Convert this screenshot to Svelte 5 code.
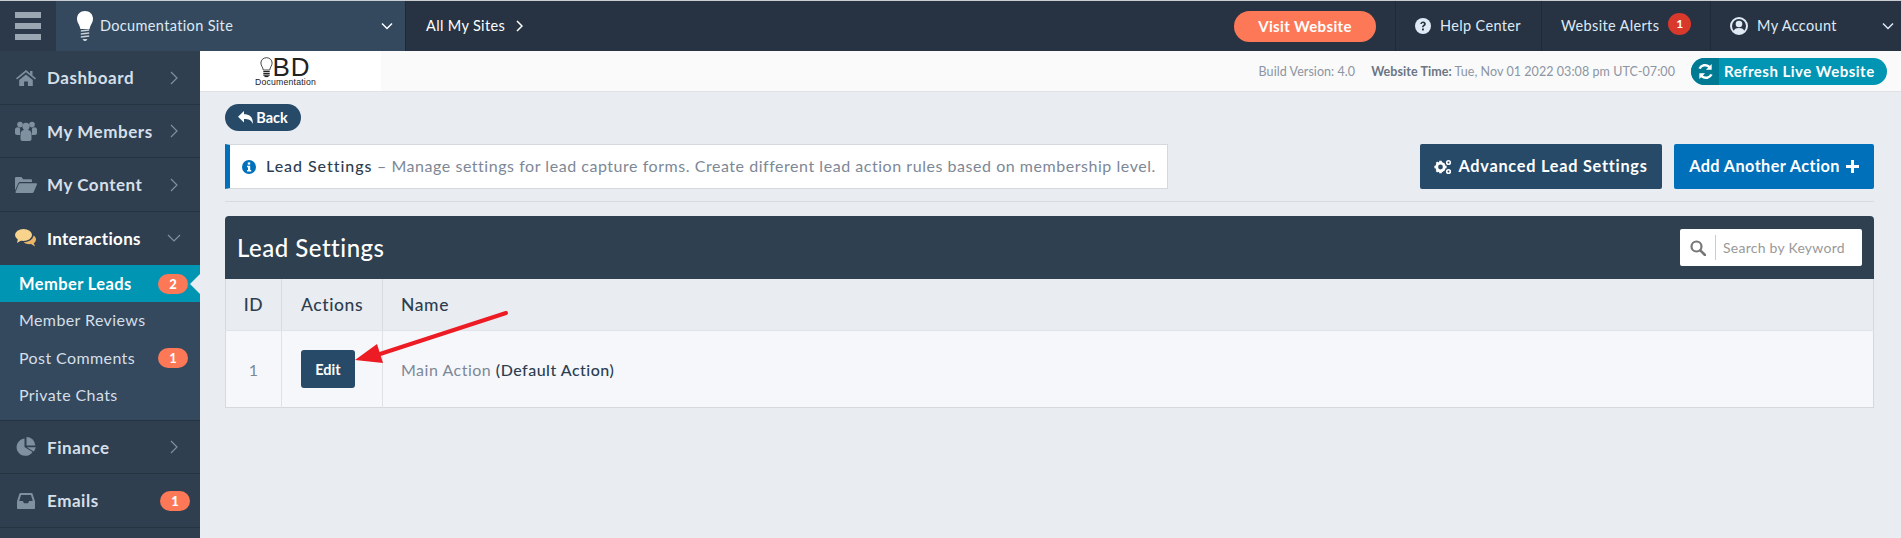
<script>
  const topItems = [
    { label: 'Dashboard', icon: 'home' },
    { label: 'My Members', icon: 'users' },
    { label: 'My Content', icon: 'folder' }
  ];
  const subItems = [
    { label: 'Member Leads', badge: '2', active: true },
    { label: 'Member Reviews' },
    { label: 'Post Comments', badge: '1' },
    { label: 'Private Chats' }
  ];
</script>

{#snippet chevronRight()}
  <svg class="chev" width="8" height="14" viewBox="0 0 8 14"><path d="M1 1l6 6-6 6" fill="none" stroke="currentColor" stroke-width="1.2"/></svg>
{/snippet}

{#snippet navIcon(name)}
  {#if name === 'home'}
    <svg class="ni" width="20" height="16" viewBox="0 0 20 16"><path fill="#7f909f" d="M10 0L0 8.3l1 1.2L10 2.2l9 7.3 1-1.2-3.5-2.9V1h-2.4v2.5zM3.2 10v6h4.9v-4.4h3.8V16h4.9v-6L10 4.4z"/></svg>
  {:else if name === 'users'}
    <svg class="ni" width="22" height="20" viewBox="0 0 22 20"><g fill="#7f909f"><circle cx="5" cy="3.6" r="2.8"/><circle cx="17" cy="3.6" r="2.8"/><circle cx="11" cy="5.4" r="3.6"/><circle cx="2.6" cy="8.8" r="2.6"/><circle cx="19.4" cy="8.8" r="2.6"/><path d="M5.5 13c0-3 2-4.3 5.5-4.3s5.500 1.300 5.500 4.300v5c0 1-.8 2-2 2h-7c-1.200 0-2-1-2-2z"/><path d="M0 9h5v5H2c-1 0-2-1-2-2zM22 9h-5v5h3c1 0 2-1 2-2z"/></g></svg>
  {:else if name === 'folder'}
    <svg class="ni" width="22" height="16" viewBox="0 0 22 16"><path fill="#7f909f" d="M0 1.300C0 .5.500 0 1.300 0h5l2 2.200h7.500c.7 0 1.200.5 1.200 1.200v1.600H5.500c-1 0-1.700.4-2.200 1.300L0 13.500zM5 6.300h16.200c.7 0 1 .6.700 1.200L18.700 15c-.3.6-.8 1-1.500 1H1.300c-.8 0-1-.6-.7-1.200L3.700 7.200c.3-.6.700-.9 1.300-.9z"/></svg>
  {:else if name === 'comments'}
    <svg class="ni" width="21" height="18" viewBox="0 0 21 18"><ellipse cx="8.500" cy="6" rx="8.500" ry="6" fill="#f8d38b"/><path d="M3 9.500L2 14l5-3z" fill="#f8d38b"/><path d="M18.500 6.500c1.600 1 2.500 2.400 2.500 4 0 1.500-.9 2.900-2.200 3.800l1.200 3.200-4-2.400c-3 .4-5.800-.4-7.300-2.100 4.800.2 9.300-2.400 9.800-6.500z" fill="#e9b566"/></svg>
  {:else if name === 'pie'}
    <svg class="ni" width="20" height="20" viewBox="0 0 20 20"><g fill="#7f909f"><path d="M8.500 1.500a8.700 8.700 0 1 0 8 13.500L8.500 10z"/><path d="M10.500 0a8.800 8.800 0 0 1 8.800 8.500h-8.800z"/><path d="M10.800 10.300h9a9 9 0 0 1-2.200 4.200z"/></g></svg>
  {:else if name === 'inbox'}
    <svg class="ni" width="18" height="16" viewBox="0 0 18 16"><path fill="#7f909f" d="M3.500 0h11c.5 0 .9.300 1.100.7L18 8.300V15c0 .6-.4 1-1 1H1c-.6 0-1-.4-1-1V8.300L2.400.7C2.600.3 3 0 3.500 0zm.6 2L2.200 8h3.600l1.200 2.200h4L12.200 8h3.600l-1.900-6z"/></svg>
  {/if}
{/snippet}

<div class="page">
  <header class="topbar">
    <button class="burger" aria-label="Menu"><span></span><span></span><span></span></button>
    <div class="site">
      <svg class="bulb" width="18" height="32" viewBox="0 0 18 32"><path fill="#fff" d="M9 1c4.700 0 8 3.400 8 7.700 0 4-2.800 6-3.400 10.300H4.400C3.800 14.700 1 12.700 1 8.700 1 4.400 4.300 1 9 1z"/><g fill="none" stroke="#c9d0d6" stroke-width="1.500"><path d="M4.800 21l8.400-1M4.800 24l8.400-1M4.800 27l8.400-1"/></g><path d="M6.500 29h5l-1.500 2H8z" fill="#c9d0d6"/></svg>
      <span class="site-name">Documentation Site</span>
      <svg class="site-chev" width="12" height="8" viewBox="0 0 12 8"><path d="M1 1.500l5 5 5-5" fill="none" stroke="#fff" stroke-width="1.500"/></svg>
    </div>
    <div class="all-sites">
      <span>All My Sites</span>
      <svg width="7" height="12" viewBox="0 0 7 12"><path d="M1 1l5 5-5 5" fill="none" stroke="#fff" stroke-width="1.500"/></svg>
    </div>
    <div class="visit-cell"><span class="visit">Visit Website</span></div>
    <div class="tb help">
      <svg width="16" height="16" viewBox="0 0 16 16"><circle cx="8" cy="8" r="8" fill="#dfeaf5"/><path d="M5.300 6c.2-1.500 1.300-2.400 2.800-2.400 1.600 0 2.700 1 2.700 2.300 0 1.100-.6 1.600-1.300 2.100-.6.400-.8.700-.8 1.300H7c0-1.100.3-1.600 1-2.100.6-.4.900-.7.900-1.200s-.4-.9-1-.9-1 .4-1.100 1z" fill="#273343"/><rect x="7" y="10.500" width="1.900" height="1.900" fill="#273343"/></svg>
      <span>Help Center</span>
    </div>
    <div class="tb alerts"><span>Website Alerts</span><b class="alert-badge">1</b></div>
    <div class="tb account">
      <svg width="18" height="18" viewBox="0 0 18 18"><circle cx="9" cy="9" r="8" fill="none" stroke="#dfeaf5" stroke-width="2"/><circle cx="9" cy="7" r="3.300" fill="#dfeaf5"/><path d="M3.500 14.500c.6-2.500 2.500-3.500 5.500-3.500s4.900 1 5.500 3.500C13 16 11 17 9 17s-4-1-5.500-2.500z" fill="#dfeaf5"/></svg>
      <span>My Account</span>
      <svg class="acc-chev" width="12" height="8" viewBox="0 0 12 8"><path d="M1 1.500l5 5 5-5" fill="none" stroke="#dfeaf5" stroke-width="1.500"/></svg>
    </div>
  </header>

  <div class="body">
    <aside class="sidebar">
      {#each topItems as item}
        <div class="nav">
          <span class="ni-box">{@render navIcon(item.icon)}</span>
          <span class="nav-label">{item.label}</span>
          {@render chevronRight()}
        </div>
      {/each}
      <div class="nav open">
        <span class="ni-box">{@render navIcon('comments')}</span>
        <span class="nav-label">Interactions</span>
        <svg class="chev down" width="14" height="8" viewBox="0 0 14 8"><path d="M1 1l6 6 6-6" fill="none" stroke="currentColor" stroke-width="1.200"/></svg>
      </div>
      <div class="sub">
        {#each subItems as s}
          <div class="sub-item" class:active={s.active}>
            <span class="sub-label">{s.label}</span>
            {#if s.badge}<b class="pill">{s.badge}</b>{/if}
          </div>
        {/each}
      </div>
      <div class="nav">
        <span class="ni-box">{@render navIcon('pie')}</span>
        <span class="nav-label">Finance</span>
        {@render chevronRight()}
      </div>
      <div class="nav">
        <span class="ni-box">{@render navIcon('inbox')}</span>
        <span class="nav-label">Emails</span>
        <b class="pill nav-pill">1</b>
      </div>
    </aside>

    <main class="main">
      <div class="subhead">
        <div class="logo">
          <div class="logo-top">
            <svg width="13" height="21" viewBox="0 0 13 21"><path d="M6.500.7c3.200 0 5.600 2.300 5.600 5.300 0 2.800-2 4.100-2.400 7H3.300c-.4-2.900-2.400-4.200-2.400-7C.9 3 3.300.7 6.500.7z" fill="none" stroke="#333" stroke-width=".9"/><path d="M3.300 14.500h6.400M3.300 16.300h6.400M3.300 18.100h6.400" stroke="#222" stroke-width="1.200"/><path d="M4.500 19.500h4" stroke="#222" stroke-width="1.200"/></svg>
            <span class="logo-bd">BD</span>
          </div>
          <div class="logo-doc">Documentation</div>
        </div>
        <div class="meta">
          <span class="build">Build Version: 4.0</span>
          <span class="time"><b>Website Time:</b> Tue, Nov 01 2022 03:08 pm UTC-07:00</span>
          <span class="refresh">
            <span class="refresh-ic">
              <svg width="17" height="17" viewBox="0 0 16 16"><g fill="#fff"><path d="M13.800 1v5.400H8.400l2.100-2.100A4.600 4.600 0 0 0 3.500 5.700L1.300 5A7 7 0 0 1 12.200 2.500z"/><path d="M2.200 15V9.600h5.400l-2.100 2.100a4.600 4.600 0 0 0 7-1.400l2.200.7A7 7 0 0 1 3.800 13.500z"/></g></svg>
            </span>
            <span class="refresh-t">Refresh Live Website</span>
          </span>
        </div>
      </div>

      <div class="content">
        <button class="back">
          <svg width="15" height="13" viewBox="0 0 15 13"><path fill="#fff" d="M6 0v3.300C11 3.300 15 5.500 15 13c-1.500-3.700-4.300-5-9-5v3.500L0 5.700z"/></svg>
          Back
        </button>
        <div class="action-row">
          <div class="notice">
            <svg width="14" height="14" viewBox="0 0 14 14"><circle cx="7" cy="7" r="7" fill="#0070bb"/><rect x="5.800" y="2.400" width="2.400" height="2.200" fill="#fff"/><path d="M5 5.700h3.200v4.400H9.200v1.500H5v-1.500h1V7.200H5z" fill="#fff"/></svg>
            <span class="notice-t"><span class="dark lead">Lead Settings</span> – Manage settings for lead capture forms. Create different lead action rules based on membership level.</span>
          </div>
          <div class="btns">
            <button class="btn navy">
              <svg width="18" height="16" viewBox="0 0 18 16"><g fill="#fff"><circle cx="6.500" cy="8" r="3.800" fill="none" stroke="#fff" stroke-width="2.800"/><path d="M5.200 1.800h2.600v2H5.200zM5.200 12.200h2.600v2H5.200zM.4 6.700h2v2.600h-2zM10.600 6.700h2v2.600h-2zM1.700 4l1.500-1.500 1.500 1.500-1.500 1.500zM8.300 10.600l1.500-1.500 1.500 1.500-1.500 1.500zM1.700 12l1.500 1.500 1.500-1.500-1.500-1.500zM8.300 5.400l1.500 1.500 1.500-1.500-1.500-1.500z"/><circle cx="14.500" cy="3.500" r="1.800" fill="none" stroke="#fff" stroke-width="1.600"/><circle cx="14.500" cy="12.500" r="1.800" fill="none" stroke="#fff" stroke-width="1.600"/></g></svg>
              <span>Advanced Lead Settings</span>
            </button>
            <button class="btn blue">
              <span>Add Another Action</span>
              <svg width="13" height="13" viewBox="0 0 13 13"><path fill="#fff" d="M5 0h3v5h5v3H8v5H5V8H0V5h5z"/></svg>
            </button>
          </div>
        </div>
        <hr />
        <section class="panel">
          <div class="panel-head">
            <h2>Lead Settings</h2>
            <div class="search">
              <svg width="16" height="16" viewBox="0 0 16 16"><circle cx="6.500" cy="6.500" r="5" fill="none" stroke="#777" stroke-width="2.200"/><path d="M10.300 10.300L15 15" stroke="#777" stroke-width="2.600" stroke-linecap="round"/></svg>
              <span class="search-t">Search by Keyword</span>
            </div>
          </div>
          <table>
            <thead>
              <tr><th class="c1">ID</th><th class="c2">Actions</th><th class="c3">Name</th></tr>
            </thead>
            <tbody>
              <tr>
                <td class="c1 id">1</td>
                <td class="c2"><button class="edit">Edit</button></td>
                <td class="c3 name">Main Action <span class="dark">(Default Action)</span></td>
              </tr>
            </tbody>
          </table>
        </section>
      </div>
    </main>
  </div>

  <svg class="arrow" width="170" height="60" viewBox="0 0 170 60">
    <path d="M151 3L25 44" stroke="#ed1c24" stroke-width="4" stroke-linecap="round" fill="none"/>
    <path d="M0 50L22 34L28 53z" fill="#ed1c24"/>
  </svg>
</div>

<style>
  :global(body) { margin: 0; background: #e9ecf1; }
  .page {
    position: relative; width: 1901px; height: 538px; overflow: hidden;
    font-family: Lato, "Open Sans", sans-serif; color: #2c3e50; background: #e9ecf1;
  }
  button { font-family: inherit; border: 0; cursor: pointer; }

  .topbar { height: 50px; border-top: 1px solid #c9ccd0; display: flex; background: #273343; color: #dfeaf5; font-size: 14.5px; letter-spacing: .35px; }
  .topbar span:not(.visit) { padding-bottom: 1px; }
  .burger { width: 56px; background: #2b394a; display: flex; flex-direction: column; justify-content: center; align-items: center; gap: 5px; padding: 0; }
  .burger span { width: 26px; height: 5px; background: #9aa6b1; }
  .site { width: 350px; background: #34495e; display: flex; align-items: center; border-right: 1px solid #1f2a38; box-sizing: border-box; padding-left: 20px; }
  .bulb { flex: none; }
  .site-name { margin-left: 6px; flex: 1; }
  .site-chev { margin-right: 12px; }
  .all-sites { width: 230px; display: flex; align-items: center; gap: 11px; padding-left: 20px; box-sizing: border-box; color: #fff; }
  .visit-cell { flex: 1; display: flex; align-items: center; justify-content: flex-end; padding-right: 19px; }
  .visit { width: 142px; height: 31px; border-radius: 16px; background: #fd7857; color: #fff; font-weight: 700; display: flex; align-items: center; justify-content: center; font-size: 15px; }
  .tb { display: flex; align-items: center; border-left: 1px solid #1f2a38; box-sizing: border-box; }
  .help { width: 146px; padding-left: 19px; gap: 9px; }
  .alerts { width: 169px; padding-left: 19px; gap: 9px; }
  .alert-badge { width: 23px; height: 22px; margin-top: -5px; border-radius: 50%; background: #d9392b; color: #fff; font-size: 12px; display: flex; align-items: center; justify-content: center; }
  .account { width: 191px; padding-left: 19px; gap: 9px; }
  .acc-chev { margin-left: 36px; }

  .body { display: flex; height: 487px; }
  .sidebar { width: 200px; flex: none; background: #2f3f50; overflow: hidden; }
  .nav { height: 53.5px; box-sizing: border-box; padding-top: 1px; border-bottom: 1px solid #263341; display: flex; align-items: center; color: #d5dfe9; font-size: 17px; font-weight: 700; letter-spacing: .55px; position: relative; }
  .nav.open { color: #fff; border-bottom: 0; letter-spacing: .3px; padding-top: 0; }
  .ni-box { width: 47px; flex: none; display: flex; justify-content: center; padding-left: 4px; box-sizing: border-box; }
  .nav-label { flex: 1; }
  .chev { color: #7f909f; margin-right: 22px; }
  .chev.down { margin-right: 19px; }
  .sub { background: #34495e; padding-bottom: 5px; border-bottom: 1px solid #263341; color: #d5dfe9; font-size: 16px; letter-spacing: .4px; }
  .sub-item { height: 37.5px; display: flex; align-items: center; justify-content: space-between; padding: 0 12px 0 19px; position: relative; }
  .sub-label { padding-bottom: 2px; }
  .sub-item.active { background: #0095b3; color: #fff; font-weight: 700; font-size: 16.5px; height: 37px; }
  .sub-item.active .sub-label { padding-bottom: 0; }
  .sub-item.active::after { content: ""; position: absolute; right: 0; top: 9px; border: 10px solid transparent; border-right-color: #e9ecf1; border-left: 0; }
  .pill { width: 30px; height: 20px; border-radius: 10px; background: #fd7857; color: #fff; font-size: 13px; display: flex; align-items: center; justify-content: center; letter-spacing: 0; }
  .nav-pill { margin-right: 10px; }

  .main { flex: 1; min-width: 0; display: flex; flex-direction: column; }
  .subhead { height: 41px; flex: none; background: #fafafa; border-bottom: 1px solid #dfe1e5; box-sizing: border-box; display: flex; align-items: center; justify-content: space-between; }
  .logo { width: 181px; height: 100%; background: #fff; color: #222; display: flex; flex-direction: column; align-items: center; box-sizing: border-box; padding-right: 10px; }
  .logo-top { display: flex; align-items: flex-end; height: 24px; margin-top: 3px; }
  .logo-bd { font-family: "Liberation Sans", sans-serif; font-size: 26px; line-height: 22px; letter-spacing: 1px; margin-left: -1px; }
  .logo-doc { font-family: "Liberation Sans", sans-serif; font-size: 8.7px; line-height: 9px; letter-spacing: .2px; }
  .meta { display: flex; align-items: center; font-size: 12.5px; letter-spacing: .06px; color: #8c95a3; padding-right: 14px; }
  .time { margin-left: 16px; margin-right: 16px; }
  .time b { color: #6b7684; }
  .refresh { width: 196px; height: 27px; border-radius: 14px; background: #0095b3; color: #fff; display: flex; align-items: center; overflow: hidden; font-weight: 700; font-size: 15px; letter-spacing: .5px; }
  .refresh-ic { width: 28px; height: 100%; background: #007a93; display: flex; align-items: center; justify-content: center; }
  .refresh-t { margin-left: 5px; }

  .content { padding: 12px 27px 0 25px; }
  .back { width: 76px; height: 27px; border-radius: 14px; background: #264a68; color: #fff; font-weight: 700; font-size: 14.5px; display: flex; align-items: center; justify-content: center; gap: 3px; padding: 0; }
  .action-row { margin-top: 13px; display: flex; justify-content: space-between; }
  .notice { width: 943px; height: 45px; box-sizing: border-box; background: #fff; border: 1px solid #d5d8dc; border-left: 5px solid #0070bb; display: flex; align-items: center; padding-left: 12px; gap: 10px; font-size: 16px; color: #7d8896; letter-spacing: .54px; white-space: nowrap; }
  .notice-t { padding-bottom: 2px; }
  .dark { color: #2c3e50; font-weight: 500; }
  .lead { letter-spacing: .95px; }
  .btns { display: flex; gap: 12px; }
  .btn { height: 45px; border-radius: 2px; color: #fff; font-weight: 700; font-size: 16.3px; display: flex; align-items: center; justify-content: center; gap: 6px; padding: 0; }
  .btn span { padding-bottom: 2px; }
  .navy { width: 242px; background: #264a68; letter-spacing: .75px; }
  .blue { width: 200px; background: #0070bb; letter-spacing: .4px; }
  hr { border: 0; border-top: 1px solid #d8dbe0; margin: 12px 0 14px; }
  .panel-head { height: 63px; background: #2f4050; border-radius: 4px 4px 0 0; display: flex; align-items: center; justify-content: space-between; padding: 0 12px; }
  h2 { margin: 0; color: #fff; font-size: 24px; font-weight: 500; letter-spacing: .5px; }
  .search { width: 182px; height: 37px; box-sizing: border-box; background: #fff; border-radius: 2px; display: flex; align-items: center; padding-left: 10px; }
  .search-t { margin-left: 9px; padding-left: 7px; border-left: 1px solid #ccc; line-height: 25px; font-size: 14px; color: #999; letter-spacing: .25px; white-space: nowrap; }
  table { width: 100%; border-collapse: collapse; border: 1px solid #d5d8dc; border-top: 0; table-layout: fixed; font-size: 17.5px; }
  th { height: 51px; background: #e9ecf1; font-weight: 500; text-align: left; padding: 0; color: #2c3e50; letter-spacing: .6px; border-right: 1px solid #d8dbe0; border-bottom: 1px solid #e0e3e8; }
  th:last-child, td:last-child { border-right: 0; }
  td { height: 76px; background: #f6f7fb; padding: 0; border-right: 1px solid #dfe1e5; letter-spacing: .4px; }
  .c1 { width: 55px; text-align: center; }
  .c2 { width: 81px; padding-left: 19px; }
  .c3 { padding-left: 18px; }
  .id { color: #7d8896; font-size: 16px; }
  .name { color: #7d8896; font-size: 16px; letter-spacing: .5px; }
  .edit { width: 54px; height: 38px; background: #264a68; color: #fff; font-weight: 700; font-size: 14.5px; border-radius: 3px; padding: 0; display: block; }
  .arrow { position: absolute; left: 355px; top: 310px; }
</style>
